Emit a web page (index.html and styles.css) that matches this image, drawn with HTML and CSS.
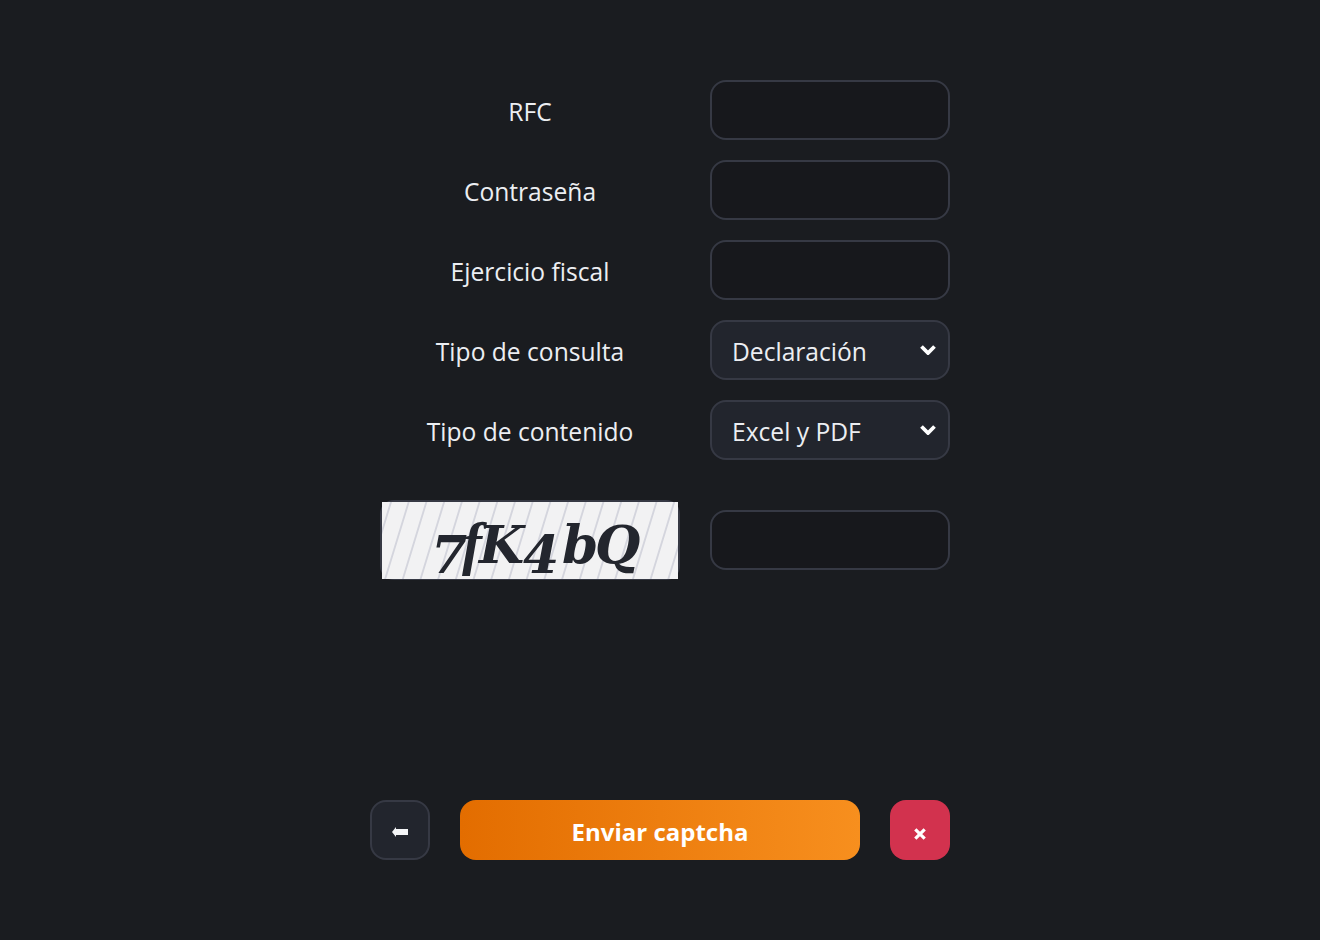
FILE: index.html
```html
<!DOCTYPE html>
<html lang="es">
<head>
  <meta charset="UTF-8" />
  <title>Enviar captcha</title>
  <link rel="stylesheet" href="styles.css">
</head>
<body>
  <main class="panel">
    <form class="form">
      <label class="label" for="rfc">RFC</label>
      <input class="field" id="rfc" type="text">

      <label class="label" for="password">Contraseña</label>
      <input class="field" id="password" type="password">

      <label class="label" for="year">Ejercicio fiscal</label>
      <input class="field" id="year" type="text">

      <span class="label">Tipo de consulta</span>
      <div class="select">
        <span>Declaración</span>
        <svg class="chevron" viewBox="0 0 16 10" width="16" height="10"><path d="M1.5 1.5L8 8l6.5-6.5" fill="none" stroke="#fff" stroke-width="3.8"/></svg>
      </div>

      <span class="label">Tipo de contenido</span>
      <div class="select">
        <span>Excel y PDF</span>
        <svg class="chevron" viewBox="0 0 16 10" width="16" height="10"><path d="M1.5 1.5L8 8l6.5-6.5" fill="none" stroke="#fff" stroke-width="3.8"/></svg>
      </div>
    </form>

    <div class="form captcha-row">
      <div class="captcha-cell">
        <div class="captcha">
          <svg class="captcha-img" viewBox="0 0 296 77" width="296" height="77">
            <defs>
              <pattern id="stripes" width="17.7" height="77" patternUnits="userSpaceOnUse" patternTransform="translate(8 0) skewX(-17)">
                <line x1="1" y1="0" x2="1" y2="77" stroke="#d2d3dc" stroke-width="1.8"/>
              </pattern>
            </defs>
            <rect width="296" height="77" fill="#f2f2f3"/>
            <rect width="296" height="77" fill="url(#stripes)"/>
            <text class="captcha-text"><tspan x="49" y="71">7</tspan><tspan class="captcha-f" x="80" y="61">f</tspan><tspan x="97" y="61">K</tspan><tspan x="141" y="71">4</tspan><tspan x="180" y="61">b</tspan><tspan x="213" y="61">Q</tspan></text>
          </svg>
        </div>
      </div>
      <input class="field" id="captcha" type="text">
    </div>

    <div class="actions">
      <button class="btn btn-back" type="button">
        <svg viewBox="0 0 16 10" width="16" height="10"><path d="M0 5l4-5v2h12v6H4v2z" fill="#f4f5f7"/></svg>
      </button>
      <button class="btn btn-send" type="button">Enviar captcha</button>
      <button class="btn btn-close" type="button">
        <svg viewBox="0 0 12 12" width="12" height="12"><path d="M1.3 1.3l9.4 9.4M10.7 1.3l-9.4 9.4" fill="none" stroke="#fff" stroke-width="3.2"/></svg>
      </button>
    </div>
  </main>
</body>
</html>
```

FILE: styles.css
```css
* {
  box-sizing: border-box;
}

body {
  margin: 0;
  height: 940px;
  background-color: #1a1c20;
  color: #eceef2;
  font-family: "Open Sans", "Noto Sans", sans-serif;
  font-size: 24.6px;
  overflow: hidden;
}

.panel {
  width: 580px;
  margin: 0 auto;
  padding-top: 80px;
}

.form {
  display: grid;
  grid-template-columns: 320px 240px;
  grid-auto-rows: 60px;
  column-gap: 20px;
  row-gap: 20px;
  align-items: center;
}

.label {
  text-align: center;
  padding-top: 3px;
}

.field {
  width: 240px;
  height: 60px;
  background-color: #17181c;
  border: 2px solid #363944;
  border-radius: 16px;
}

.select {
  display: flex;
  align-items: center;
  justify-content: space-between;
  width: 240px;
  height: 60px;
  padding: 0 12px 0 20px;
  background-color: #22252d;
  border: 2px solid #363944;
  border-radius: 16px;
}

.select span {
  padding-top: 3px;
}

.captcha-row {
  grid-auto-rows: 80px;
  margin-top: 40px;
}

.captcha-cell {
  display: flex;
  justify-content: center;
}

.captcha {
  width: 300px;
  height: 80px;
  border: 2px solid #363944;
  border-radius: 14px;
}

.captcha-img {
  display: block;
  overflow: visible;
}

.captcha-text {
  font-family: "DejaVu Serif", serif;
  font-size: 52px;
  font-weight: bold;
  font-style: italic;
  fill: #23262e;
  filter: blur(0.5px);
}

.captcha-f {
  font-family: "Liberation Serif", serif;
  font-size: 60px;
}

.actions {
  display: flex;
  gap: 30px;
  margin-top: 220px;
}

.btn {
  display: flex;
  align-items: center;
  justify-content: center;
  height: 60px;
  border-radius: 16px;
  border: none;
  color: #fff;
  font-family: inherit;
  padding: 0;
}

.btn-back {
  width: 60px;
  background-color: #22252d;
  border: 2px solid #363944;
}

.btn-back svg {
  margin-top: 4px;
}

.btn-send {
  width: 400px;
  padding-top: 2px;
  background: linear-gradient(90deg, #e36d00, #f78f1e);
  font-size: 24px;
  font-weight: 700;
}

.btn-close {
  width: 60px;
  background-color: #d2324e;
}

.btn-close svg {
  margin-top: 8px;
}
```
